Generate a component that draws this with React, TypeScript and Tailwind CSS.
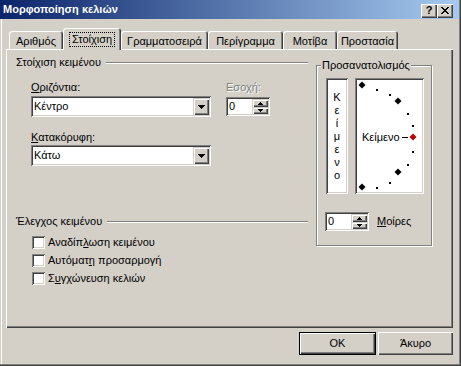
import React from "react";

const SUNKEN =
  "shadow-[inset_1px_1px_0_#808080,inset_-1px_-1px_0_#ffffff,inset_2px_2px_0_#404040,inset_-2px_-2px_0_#d4d0c8]";
const BTN =
  "shadow-[inset_1px_1px_0_#d4d0c8,inset_2px_2px_0_#ffffff,inset_-1px_-1px_0_#404040,inset_-2px_-2px_0_#808080]";
const PUSH =
  "shadow-[inset_1px_1px_0_#ffffff,inset_-1px_-1px_0_#404040,inset_-2px_-2px_0_#808080]";

function DownArrow() {
  return (
    <svg width="7" height="4" shapeRendering="crispEdges" className="block">
      <rect x="0" y="0" width="7" height="1" fill="#000" />
      <rect x="1" y="1" width="5" height="1" fill="#000" />
      <rect x="2" y="2" width="3" height="1" fill="#000" />
      <rect x="3" y="3" width="1" height="1" fill="#000" />
    </svg>
  );
}

function SmallArrow({ up }: { up: boolean }) {
  return (
    <svg width="5" height="3" shapeRendering="crispEdges" className="block">
      {up ? (
        <>
          <rect x="2" y="0" width="1" height="1" fill="#000" />
          <rect x="1" y="1" width="3" height="1" fill="#000" />
          <rect x="0" y="2" width="5" height="1" fill="#000" />
        </>
      ) : (
        <>
          <rect x="0" y="0" width="5" height="1" fill="#000" />
          <rect x="1" y="1" width="3" height="1" fill="#000" />
          <rect x="2" y="2" width="1" height="1" fill="#000" />
        </>
      )}
    </svg>
  );
}

function Combo({ value }: { value: string }) {
  return (
    <div className={`h-[21px] w-[180px] bg-white ${SUNKEN} flex p-[2px]`}>
      <span className="flex-1 self-center pl-[1px]">{value}</span>
      <div className={`w-[16px] bg-[#d4d0c8] ${BTN} flex items-center justify-center`}>
        <DownArrow />
      </div>
    </div>
  );
}

function Spin() {
  return (
    <div className={`h-[19px] w-[44px] bg-white ${SUNKEN} flex p-[2px]`}>
      <span className="flex-1 self-center pl-[1px]">0</span>
      <div className="w-[16px] flex flex-col">
        <div className={`h-[8px] bg-[#d4d0c8] ${BTN} flex items-center justify-center`}>
          <SmallArrow up />
        </div>
        <div className={`flex-1 bg-[#d4d0c8] ${BTN} flex items-center justify-center`}>
          <SmallArrow up={false} />
        </div>
      </div>
    </div>
  );
}

function Check({ children }: { children: React.ReactNode }) {
  return (
    <div className="flex items-center gap-[3px] h-[13px] pl-[16px]">
      <div className={`w-[13px] h-[13px] bg-white ${SUNKEN}`} />
      <span>{children}</span>
    </div>
  );
}

function Tab({ label, w }: { label: string; w: string }) {
  return (
    <div
      className={`${w} h-[18px] rounded-t-[3px] shadow-[inset_1px_1px_0_#ffffff,inset_-1px_0_0_#404040,inset_-2px_0_0_#808080] flex items-center justify-center pt-[2px]`}
    >
      {label}
    </div>
  );
}

function Diamond({ x, y, fill }: { x: number; y: number; fill: string }) {
  return (
    <polygon
      points={`${x},${y - 3.5} ${x + 3.5},${y} ${x},${y + 3.5} ${x - 3.5},${y}`}
      fill={fill}
    />
  );
}

function Dial() {
  const cx = 7;
  const cy = 59;
  const r = 51;
  const dots = [75, 60, 30, 15, -15, -30, -60, -75];
  return (
    <svg width="65" height="112" className="block">
      {dots.map((a) => {
        const rad = (a * Math.PI) / 180;
        const x = Math.round(cx + r * Math.cos(rad));
        const y = Math.round(cy - r * Math.sin(rad));
        return <rect key={a} x={x - 1} y={y - 1} width="2" height="2" fill="#000" />;
      })}
      <Diamond x={5} y={5} fill="#000" />
      <Diamond x={41} y={21} fill="#000" />
      <Diamond x={41} y={92} fill="#000" />
      <Diamond x={5} y={107} fill="#000" />
      <Diamond x={56} y={57} fill="#c00000" />
      <text
        x="5"
        y="61"
        fontSize="11"
        fontFamily="'Liberation Sans', Arial, sans-serif"
        fill="#000"
      >
        Κείμενο
      </text>
      <line x1="45" y1="57.5" x2="51" y2="57.5" stroke="#000" strokeWidth="1" />
    </svg>
  );
}

export default function App() {
  return (
    <div className="w-[461px] h-[366px] bg-[#d4d0c8] overflow-hidden flex flex-col font-['Liberation_Sans',Arial,sans-serif] text-[11px] leading-[13px] text-black shadow-[inset_-1px_-1px_0_#404040,inset_-2px_-2px_0_#808080,inset_1px_0_0_#d4d0c8,inset_2px_0_0_#ffffff]">
      {/* Title bar */}
      <div className="w-[459px] h-[19px] bg-[linear-gradient(to_right,#0a246a,#a6caf0)] flex items-center pl-[3px] pr-[6px]">
        <span className="flex-1 font-bold text-white">Μορφοποίηση κελιών</span>
        <div className={`w-[16px] h-[14px] bg-[#d4d0c8] ${PUSH} flex items-center justify-center font-bold text-[11px] leading-[11px] mt-[2px]`}>
          ?
        </div>
        <div className={`w-[16px] h-[14px] bg-[#d4d0c8] ${PUSH} flex items-center justify-center mt-[2px]`}>
          <svg width="8" height="7" className="block" shapeRendering="crispEdges">
            <path d="M0 0h2v1h-2zM6 0h2v1h-2zM1 1h2v1h-2zM5 1h2v1h-2zM2 2h4v1h-4zM3 3h2v1h-2zM2 4h4v1h-4zM1 5h2v1h-2zM5 5h2v1h-2zM0 6h2v1h-2zM6 6h2v1h-2z" fill="#000" />
          </svg>
        </div>
      </div>

      {/* Tabs */}
      <div className="mt-[9px] h-[21px] flex items-end pl-[9px]">
        <Tab label="Αριθμός" w="w-[54px]" />
        <div className="relative z-10 w-[58px] h-[22px] -mb-[1px] bg-[#d4d0c8] rounded-t-[3px] shadow-[inset_1px_1px_0_#ffffff,inset_-1px_0_0_#404040,inset_-2px_0_0_#808080] flex justify-center pt-[4px]">
          <span className="h-[15px] px-[2px] border border-dotted border-black leading-[13px]">
            Στοίχιση
          </span>
        </div>
        <Tab label="Γραμματοσειρά" w="w-[87px]" />
        <Tab label="Περίγραμμα" w="w-[75px]" />
        <Tab label="Μοτίβα" w="w-[54px]" />
        <Tab label="Προστασία" w="w-[61px]" />
      </div>

      {/* Panel */}
      <div className="ml-[6px] w-[447px] h-[279px] shadow-[inset_1px_1px_0_#ffffff,inset_-1px_-1px_0_#404040,inset_-2px_-2px_0_#808080] flex pl-[10px] pt-[7px]">
        {/* Left column */}
        <div className="w-[292px] flex flex-col">
          <div className="flex items-center h-[13px]">
            <span>Στοίχιση κειμένου</span>
            <div className="flex-1 ml-[5px] h-[2px] border-t border-t-[#808080] border-b border-b-white" />
          </div>
          <div className="flex pl-[15px] mt-[12px]">
            <div className="w-[180px] flex flex-col">
              <span>
                <span className="underline">Ο</span>ριζόντια:
              </span>
              <div className="mt-[2px]">
                <Combo value="Κέντρο" />
              </div>
              <span className="mt-[14px]">
                <span className="underline">Κ</span>ατακόρυφη:
              </span>
              <div className="mt-[1px]">
                <Combo value="Κάτω" />
              </div>
            </div>
            <div className="ml-[15px] flex flex-col">
              <span className="text-[#808080] [text-shadow:1px_1px_0_#ffffff]">Εσοχή:</span>
              <div className="mt-[3px]">
                <Spin />
              </div>
            </div>
          </div>

          <div className="flex items-center h-[13px] mt-[49px]">
            <span>Έλεγχος κειμένου</span>
            <div className="flex-1 ml-[5px] h-[2px] border-t border-t-[#808080] border-b border-b-white" />
          </div>
          <div className="mt-[8px] flex flex-col gap-[5px]">
            <Check>
              Αναδίπ<span className="underline">λ</span>ωση κειμένου
            </Check>
            <Check>
              Αυτόματ<span className="underline">η</span> προσαρμογή
            </Check>
            <Check>
              Σ<span className="underline">υ</span>γχώνευση κελιών
            </Check>
          </div>
        </div>

        {/* Orientation group */}
        <div className="ml-[8px] mt-[9px] relative w-[116px] h-[181px] border border-[#808080] shadow-[inset_1px_1px_0_#ffffff,1px_1px_0_#ffffff] pl-[9px] pt-[12px]">
          <span className="absolute left-[4px] -top-[7px] bg-[#d4d0c8] px-[1px]">
            Προσανατολισμός
          </span>
          <div className="flex gap-[7px]">
            <div className={`w-[22px] h-[116px] bg-white ${SUNKEN} flex flex-col items-center pt-[13px]`}>
              {["Κ", "ε", "ί", "μ", "ε", "ν", "ο"].map((c, i) => (
                <span key={i} className="h-[13px] leading-[13px]">
                  {c}
                </span>
              ))}
            </div>
            <div className={`w-[69px] h-[116px] bg-white ${SUNKEN} p-[2px]`}>
              <Dial />
            </div>
          </div>
          <div className="flex items-center mt-[18px] -ml-[1px]">
            <Spin />
            <span className="ml-[8px]">
              <span className="underline">Μ</span>οίρες
            </span>
          </div>
        </div>
      </div>

      {/* Buttons */}
      <div className="mt-[4px] flex justify-end pr-[8px] gap-[2px]">
        <div className="w-[77px] h-[23px] border border-black">
          <div className={`w-full h-full ${PUSH} flex items-center justify-center`}>OK</div>
        </div>
        <div className={`w-[75px] h-[23px] ${PUSH} flex items-center justify-center`}>Άκυρο</div>
      </div>
    </div>
  );
}
